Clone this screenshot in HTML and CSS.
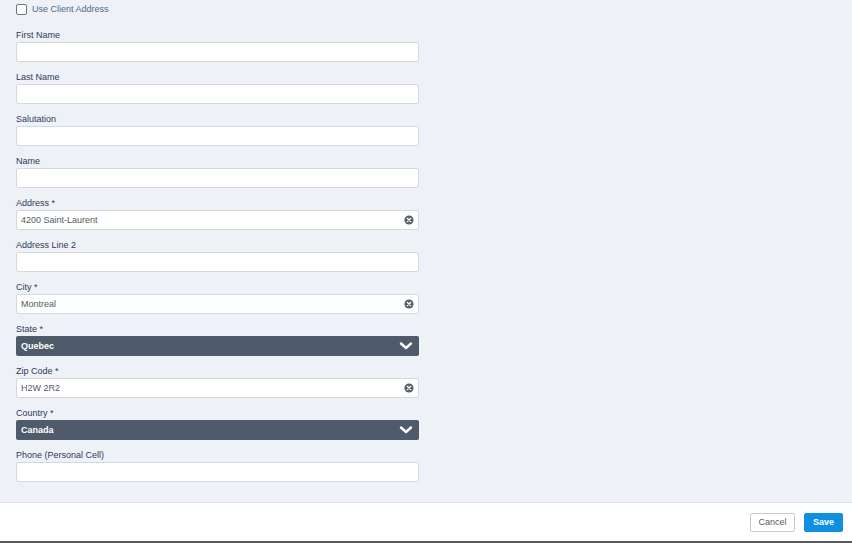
FILE: index.html
```html
<!DOCTYPE html>
<html>
<head>
<meta charset="utf-8">
<link rel="stylesheet" href="styles.css">
</head>
<body>
<div class="page">
  <main class="form">
    <label class="check-row">
      <span class="checkbox"></span>
      <span class="check-label">Use Client Address</span>
    </label>

    <div class="field">
      <div class="label">First Name</div>
      <div class="input"></div>
    </div>
    <div class="field">
      <div class="label">Last Name</div>
      <div class="input"></div>
    </div>
    <div class="field">
      <div class="label">Salutation</div>
      <div class="input"></div>
    </div>
    <div class="field">
      <div class="label">Name</div>
      <div class="input"></div>
    </div>
    <div class="field">
      <div class="label">Address *</div>
      <div class="input"><span class="value">4200 Saint-Laurent</span><span class="clear"><svg viewBox="0 0 10 10" width="10" height="10"><circle cx="5" cy="5" r="4.6" fill="#5b6068"/><path d="M3.4 3.4 L6.6 6.6 M6.6 3.4 L3.4 6.6" stroke="#fff" stroke-width="1.4" stroke-linecap="round"/></svg></span></div>
    </div>
    <div class="field">
      <div class="label">Address Line 2</div>
      <div class="input"></div>
    </div>
    <div class="field">
      <div class="label">City *</div>
      <div class="input"><span class="value">Montreal</span><span class="clear"><svg viewBox="0 0 10 10" width="10" height="10"><circle cx="5" cy="5" r="4.6" fill="#5b6068"/><path d="M3.4 3.4 L6.6 6.6 M6.6 3.4 L3.4 6.6" stroke="#fff" stroke-width="1.4" stroke-linecap="round"/></svg></span></div>
    </div>
    <div class="field">
      <div class="label">State *</div>
      <div class="select"><span class="select-value">Quebec</span><svg class="chev" viewBox="0 0 14 10" width="14" height="10"><path d="M2 2.5 L7 7 L12 2.5" fill="none" stroke="#fff" stroke-width="2.4" stroke-linecap="round" stroke-linejoin="round"/></svg></div>
    </div>
    <div class="field">
      <div class="label">Zip Code *</div>
      <div class="input"><span class="value">H2W 2R2</span><span class="clear"><svg viewBox="0 0 10 10" width="10" height="10"><circle cx="5" cy="5" r="4.6" fill="#5b6068"/><path d="M3.4 3.4 L6.6 6.6 M6.6 3.4 L3.4 6.6" stroke="#fff" stroke-width="1.4" stroke-linecap="round"/></svg></span></div>
    </div>
    <div class="field">
      <div class="label">Country *</div>
      <div class="select"><span class="select-value">Canada</span><svg class="chev" viewBox="0 0 14 10" width="14" height="10"><path d="M2 2.5 L7 7 L12 2.5" fill="none" stroke="#fff" stroke-width="2.4" stroke-linecap="round" stroke-linejoin="round"/></svg></div>
    </div>
    <div class="field">
      <div class="label">Phone (Personal Cell)</div>
      <div class="input"></div>
    </div>
  </main>
  <footer class="footer">
    <button class="btn btn-cancel">Cancel</button>
    <button class="btn btn-save">Save</button>
  </footer>
</div>
</body>
</html>
```
FILE: styles.css
```css
* { box-sizing: border-box; }
html, body {
  margin: 0;
  padding: 0;
  height: 100%;
}
body {
  font-family: "Liberation Sans", Arial, sans-serif;
  font-size: 9px;
  background: #ffffff;
}
.page {
  width: 852px;
  height: 543px;
  display: flex;
  flex-direction: column;
  border-bottom: 2px solid #5a5a5a;
}
.form {
  background: #eef1f5;
  padding: 2px 16px 20px 16px;
  border-bottom: 1px solid #e0e3e8;
}
.check-row {
  display: flex;
  align-items: center;
  height: 14px;
  gap: 5px;
}
.checkbox {
  width: 11px;
  height: 11px;
  border: 1px solid #6f747b;
  border-radius: 2px;
  background: #fff;
}
.check-label {
  color: #4d6a8c;
  font-size: 9px;
}
.field {
  width: 403px;
  margin-top: 12px;
}
.check-row + .field { margin-top: 12px; }
.field + .field { margin-top: 8px; }
.label {
  height: 14px;
  line-height: 14px;
  color: #2f3a5c;
  font-size: 9px;
}
.input {
  height: 20px;
  background: #fff;
  border: 1px solid #d5d8dd;
  border-radius: 2px;
  display: flex;
  align-items: center;
  padding: 0 4px 0 4px;
}
.value {
  flex: 1;
  color: #555a60;
  font-size: 9px;
}
.clear {
  display: flex;
  width: 10px;
  height: 10px;
}
.select {
  height: 20px;
  background: #4f5b6b;
  border-radius: 2px;
  display: flex;
  align-items: center;
  padding: 0 6px 0 5px;
}
.select-value {
  flex: 1;
  color: #fff;
  font-weight: bold;
  font-size: 9px;
}
.chev { display: block; }
.footer {
  flex: 1;
  display: flex;
  justify-content: flex-end;
  align-items: center;
  gap: 9px;
  padding: 0 9px 0 0;
  background: #fff;
}
.btn {
  font-family: "Liberation Sans", Arial, sans-serif;
  font-size: 9px;
  height: 19px;
  border-radius: 2px;
  padding: 0;
  cursor: pointer;
}
.btn-cancel {
  width: 45px;
  background: #fff;
  border: 1px solid #c8cbd0;
  color: #555a60;
}
.btn-save {
  width: 39px;
  background: #0e8fe0;
  border: 1px solid #0e8fe0;
  color: #fff;
  font-weight: bold;
}
```
